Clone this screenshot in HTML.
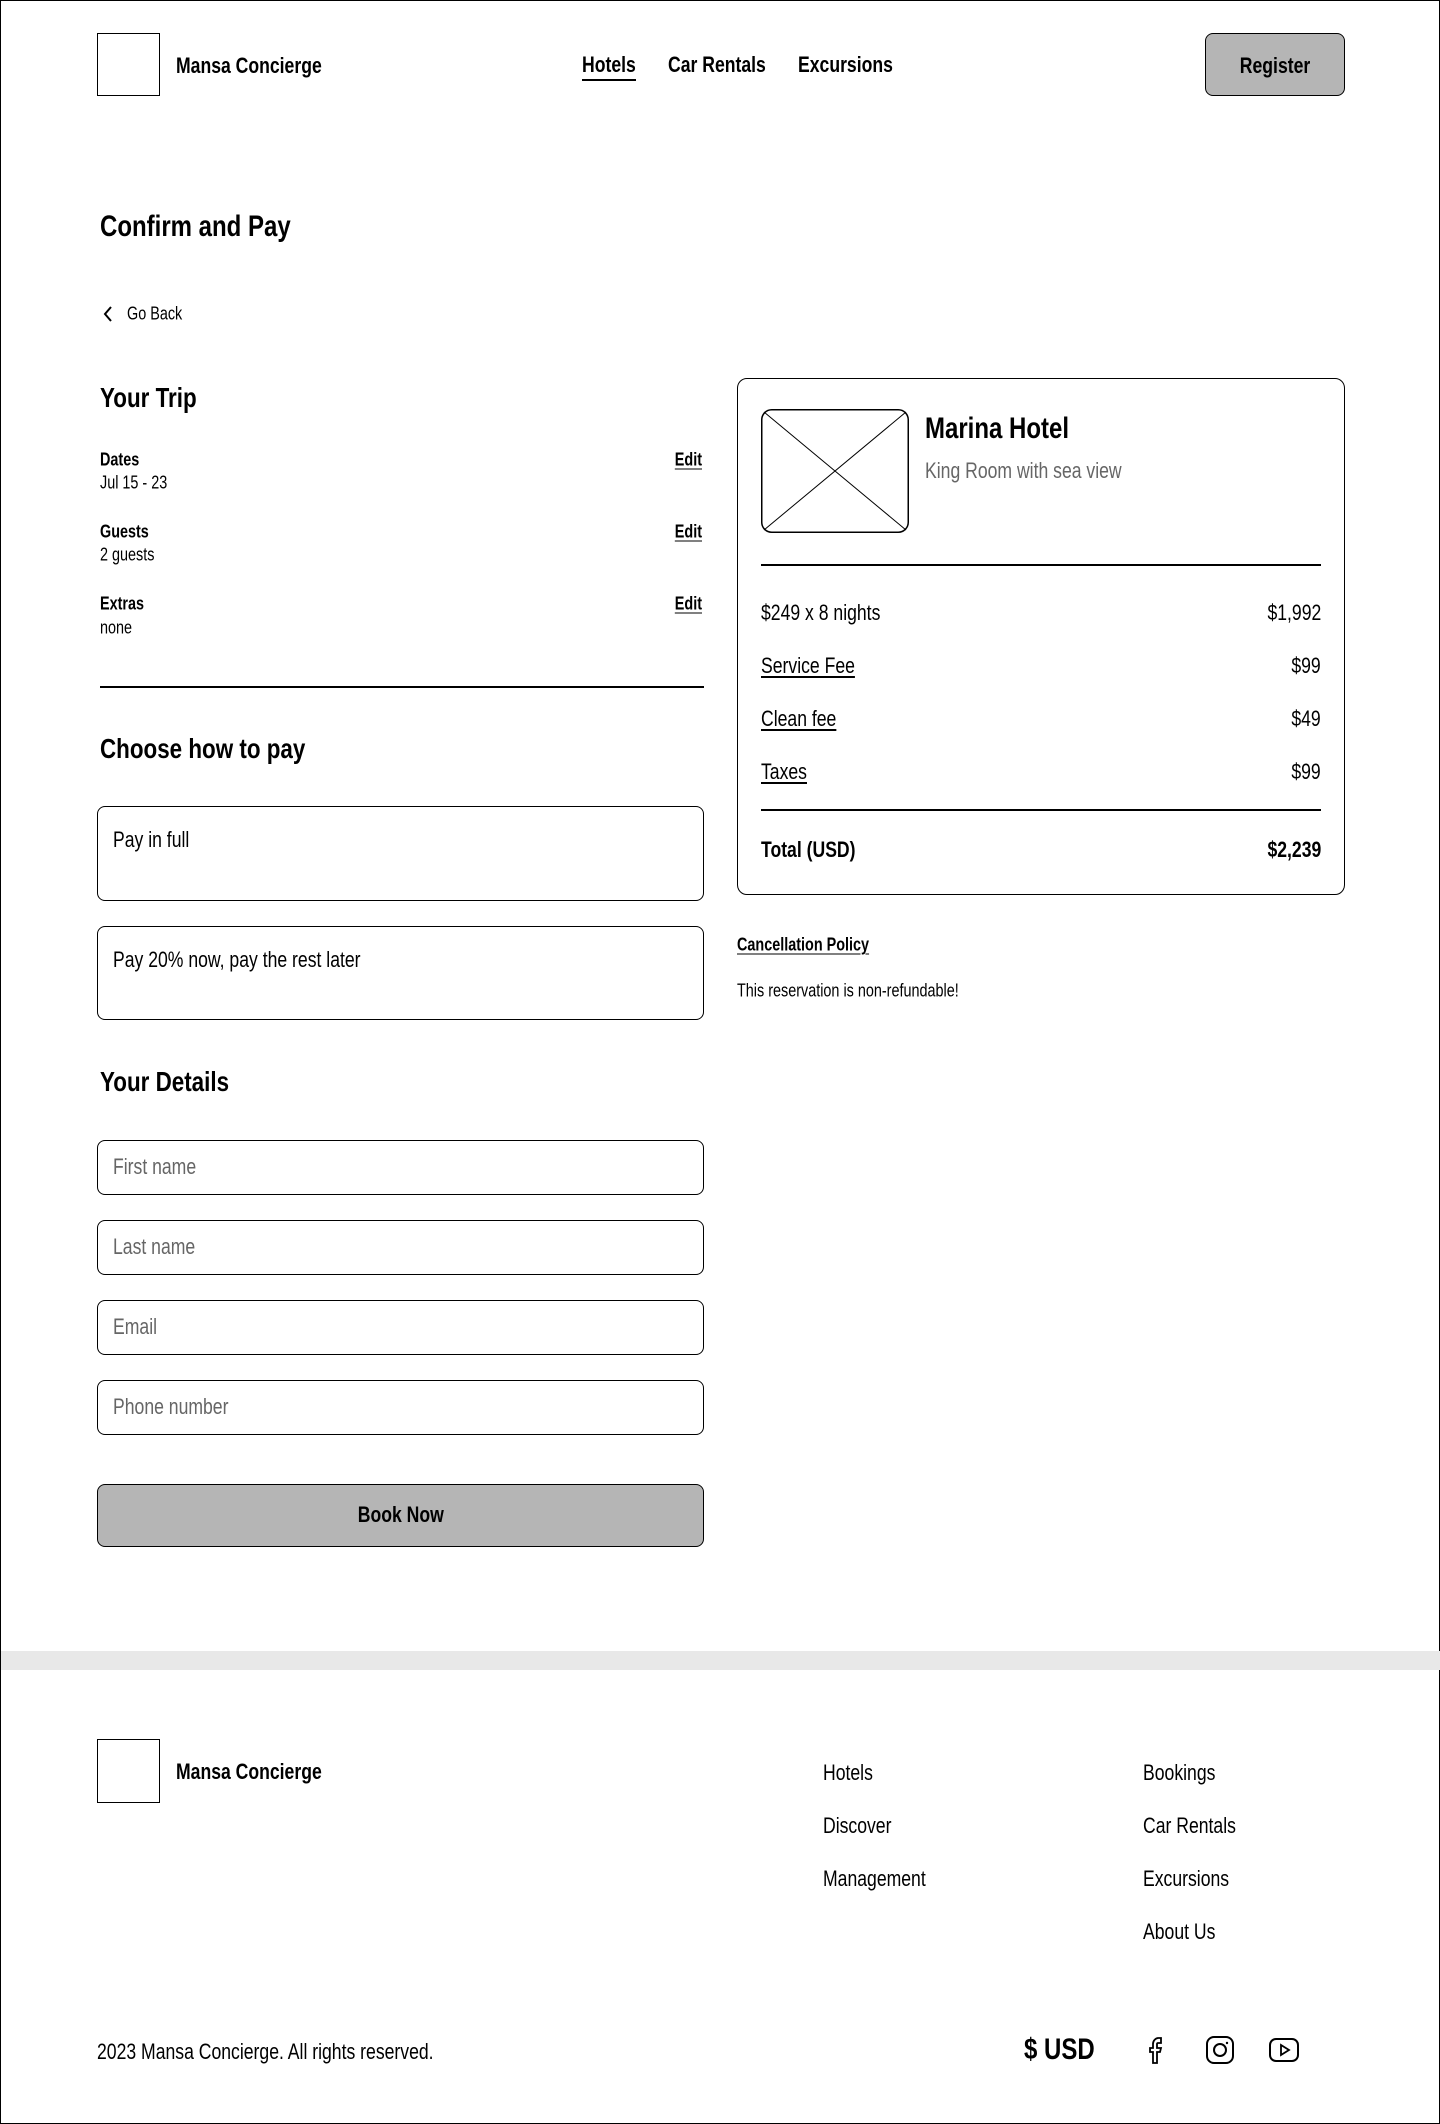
<!DOCTYPE html>
<html><head><meta charset="utf-8"><style>
*{box-sizing:border-box;margin:0;padding:0}
body{width:1440px;height:2124px;position:relative;background:#fff;font-family:"Liberation Sans Narrow","Liberation Sans",sans-serif;color:#000;border:1px solid #000;overflow:hidden}
.a{position:absolute;white-space:nowrap}
.box{position:absolute;border:1.5px solid #000}
.vc{transform:translateY(-50%) scaleX(.8);transform-origin:left center}
.vr{transform:translateY(-50%) scaleX(.8);transform-origin:right center}
.s{display:inline-block;transform:scaleX(.8)}
.sl{transform-origin:left center}.sr{transform-origin:right center}
.b{font-weight:bold}
u{text-underline-offset:3px}
.inp{position:absolute;left:96px;width:607px;height:55px;border:1.5px solid #000;border-radius:8px;font-size:22px;color:#666;padding-left:15px;line-height:52px}
.row{position:absolute;left:760px;width:560px;font-size:22px;display:flex;justify-content:space-between;transform:translateY(-50%)}
</style></head><body>
<div class="box" style="left:96px;top:32px;width:63px;height:63px"></div>
<div class="a vc b" style="left:175px;top:65px;font-size:22px">Mansa Concierge</div>
<div class="a vc b" style="left:581px;top:64px;font-size:22px">Hotels</div>
<div class="a" style="left:581px;top:78px;width:54px;height:1.5px;background:#000"></div>
<div class="a vc b" style="left:667px;top:64px;font-size:22px">Car Rentals</div>
<div class="a vc b" style="left:797px;top:64px;font-size:22px">Excursions</div>
<div class="box" style="left:1204px;top:32px;width:140px;height:63px;background:#b5b5b5;border-radius:8px;text-align:center;line-height:64px;font-size:22px;font-weight:bold"><span class="s">Register</span></div>

<div class="a vc b" style="left:99px;top:226px;font-size:30px">Confirm and Pay</div>
<svg class="a" style="left:101px;top:304px" width="12" height="18" viewBox="0 0 12 18"><path d="M9 2 L3 9 L9 16" fill="none" stroke="#000" stroke-width="2"/></svg>
<div class="a vc" style="left:126px;top:313px;font-size:18px">Go Back</div>

<div class="a vc b" style="left:99px;top:397px;font-size:28px">Your Trip</div>
<div class="a vc b" style="left:99px;top:459px;font-size:18px">Dates</div>
<div class="a vc" style="left:99px;top:482px;font-size:18px">Jul 15 - 23</div>
<div class="a vr b" style="right:737px;top:459px;font-size:18px"><u>Edit</u></div>
<div class="a vc b" style="left:99px;top:531px;font-size:18px">Guests</div>
<div class="a vc" style="left:99px;top:554px;font-size:18px">2 guests</div>
<div class="a vr b" style="right:737px;top:531px;font-size:18px"><u>Edit</u></div>
<div class="a vc b" style="left:99px;top:603px;font-size:18px">Extras</div>
<div class="a vc" style="left:99px;top:627px;font-size:18px">none</div>
<div class="a vr b" style="right:737px;top:603px;font-size:18px"><u>Edit</u></div>
<div class="a" style="left:99px;top:685px;width:604px;height:1.5px;background:#000"></div>

<div class="a vc b" style="left:99px;top:748px;font-size:28px">Choose how to pay</div>
<div class="box" style="left:96px;top:805px;width:607px;height:95px;border-radius:8px"></div>
<div class="a vc" style="left:112px;top:839px;font-size:22px">Pay in full</div>
<div class="box" style="left:96px;top:925px;width:607px;height:94px;border-radius:8px"></div>
<div class="a vc" style="left:112px;top:959px;font-size:22px">Pay 20% now, pay the rest later</div>

<div class="a vc b" style="left:99px;top:1081px;font-size:28px">Your Details</div>
<div class="inp" style="top:1139px"><span class="s sl">First name</span></div>
<div class="inp" style="top:1219px"><span class="s sl">Last name</span></div>
<div class="inp" style="top:1299px"><span class="s sl">Email</span></div>
<div class="inp" style="top:1379px"><span class="s sl">Phone number</span></div>
<div class="box" style="left:96px;top:1483px;width:607px;height:63px;background:#b5b5b5;border-radius:8px;text-align:center;line-height:60px;font-size:22px;font-weight:bold"><span class="s">Book Now</span></div>

<div class="box" style="left:736px;top:377px;width:608px;height:517px;border-radius:10px"></div>
<svg class="a" style="left:760px;top:408px" width="148" height="124" viewBox="0 0 148 124"><rect x="0.75" y="0.75" width="146.5" height="122.5" rx="10" fill="none" stroke="#000" stroke-width="1.5"/><path d="M3 3L145 121M145 3L3 121" stroke="#000" stroke-width="1"/></svg>
<div class="a vc b" style="left:924px;top:428px;font-size:30px">Marina Hotel</div>
<div class="a vc" style="left:924px;top:470px;font-size:22px;color:#666">King Room with sea view</div>
<div class="a" style="left:760px;top:563px;width:560px;height:1.5px;background:#000"></div>
<div class="row" style="top:612px"><span class="s sl">$249 x 8 nights</span><span class="s sr">$1,992</span></div>
<div class="row" style="top:665px"><u class="s sl">Service Fee</u><span class="s sr">$99</span></div>
<div class="row" style="top:718px"><u class="s sl">Clean fee</u><span class="s sr">$49</span></div>
<div class="row" style="top:771px"><u class="s sl">Taxes</u><span class="s sr">$99</span></div>
<div class="a" style="left:760px;top:808px;width:560px;height:1.5px;background:#000"></div>
<div class="row b" style="top:849px"><span class="s sl">Total (USD)</span><span class="s sr">$2,239</span></div>
<div class="a vc" style="left:736px;top:944px;font-size:18px;font-weight:bold"><u>Cancellation Policy</u></div>
<div class="a vc" style="left:736px;top:990px;font-size:18px">This reservation is non-refundable!</div>

<div class="a" style="left:0;top:1650px;width:1440px;height:19px;background:#e8e8e8"></div>
<div class="box" style="left:96px;top:1738px;width:63px;height:64px"></div>
<div class="a vc b" style="left:175px;top:1771px;font-size:22px">Mansa Concierge</div>
<div class="a vc" style="left:822px;top:1772px;font-size:22px">Hotels</div>
<div class="a vc" style="left:822px;top:1825px;font-size:22px">Discover</div>
<div class="a vc" style="left:822px;top:1878px;font-size:22px">Management</div>
<div class="a vc" style="left:1142px;top:1772px;font-size:22px">Bookings</div>
<div class="a vc" style="left:1142px;top:1825px;font-size:22px">Car Rentals</div>
<div class="a vc" style="left:1142px;top:1878px;font-size:22px">Excursions</div>
<div class="a vc" style="left:1142px;top:1931px;font-size:22px">About Us</div>
<div class="a vc" style="left:96px;top:2051px;font-size:22px">2023 Mansa Concierge. All rights reserved.</div>
<div class="a vc b" style="left:1023px;top:2049px;font-size:30px">$ USD</div>
<svg class="a" style="left:1144px;top:2034px" width="20" height="30" viewBox="0 0 20 30"><path d="M13 3h3v5h-3a1 1 0 0 0-1 1v4h4l-1 4h-3v11H8V17H5v-4h3V9a6 6 0 0 1 5-6z" fill="none" stroke="#000" stroke-width="1.8"/></svg>
<svg class="a" style="left:1204px;top:2034px" width="30" height="30" viewBox="0 0 30 30"><rect x="2" y="2" width="26" height="26" rx="7" fill="none" stroke="#000" stroke-width="2"/><circle cx="15" cy="15" r="6" fill="none" stroke="#000" stroke-width="2"/><circle cx="22" cy="8" r="1.2"/></svg>
<svg class="a" style="left:1267px;top:2036px" width="32" height="26" viewBox="0 0 32 26"><rect x="2" y="2" width="28" height="22" rx="6" fill="none" stroke="#000" stroke-width="2"/><path d="M13 8v10l8-5z" fill="none" stroke="#000" stroke-width="1.8"/></svg>
</body></html>
